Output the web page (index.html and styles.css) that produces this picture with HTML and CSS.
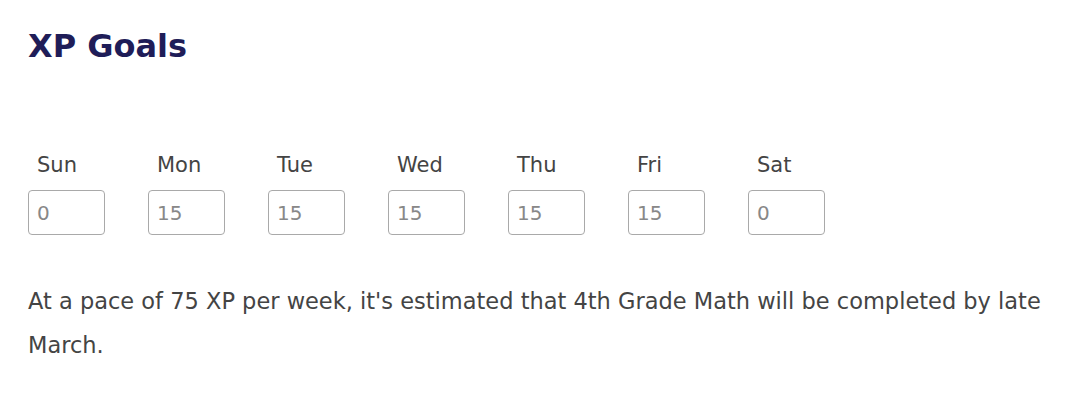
FILE: index.html
```html
<!DOCTYPE html>
<html lang="en">
<head>
    <meta charset="UTF-8">
    <title>XP Goals</title>
    <link rel="stylesheet" href="styles.css">
</head>
<body>
    <div class="goals">
        <h1 class="title">XP Goals</h1>
        <div class="days">
            <label class="day">
                <span class="day-name">Sun</span>
                <input type="text" class="day-input" value="0">
            </label>
            <label class="day">
                <span class="day-name">Mon</span>
                <input type="text" class="day-input" value="15">
            </label>
            <label class="day">
                <span class="day-name">Tue</span>
                <input type="text" class="day-input" value="15">
            </label>
            <label class="day">
                <span class="day-name">Wed</span>
                <input type="text" class="day-input" value="15">
            </label>
            <label class="day">
                <span class="day-name">Thu</span>
                <input type="text" class="day-input" value="15">
            </label>
            <label class="day">
                <span class="day-name">Fri</span>
                <input type="text" class="day-input" value="15">
            </label>
            <label class="day">
                <span class="day-name">Sat</span>
                <input type="text" class="day-input" value="0">
            </label>
        </div>
        <p class="estimate">At a pace of 75 XP per week, it's estimated that 4th Grade Math will be completed by late March.</p>
    </div>
</body>
</html>
```

FILE: styles.css
```css
body {
    margin: 0;
    background-color: #fff;
    font-family: "DejaVu Sans", sans-serif;
    color: #444;
}
.goals {
    padding: 22px 28px;
    width: 1080px;
    box-sizing: border-box;
}
.title {
    margin: 0;
    font-size: 32px;
    line-height: 48px;
    font-weight: bold;
    color: #1f1d58;
}
.days {
    display: flex;
    gap: 43px;
    margin-top: 82px;
}
.day {
    display: flex;
    flex-direction: column;
}
.day-name {
    padding-left: 9px;
    font-size: 21px;
    line-height: 26px;
    margin-bottom: 12px;
}
.day-input {
    width: 77px;
    height: 45px;
    box-sizing: border-box;
    border: 1px solid #a9a9a9;
    border-radius: 4px;
    padding: 0 8px;
    font-family: inherit;
    font-size: 20px;
    color: #888;
    background: #fff;
}
.estimate {
    margin: 44px 0 0;
    font-size: 22.5px;
    line-height: 44px;
}
```
